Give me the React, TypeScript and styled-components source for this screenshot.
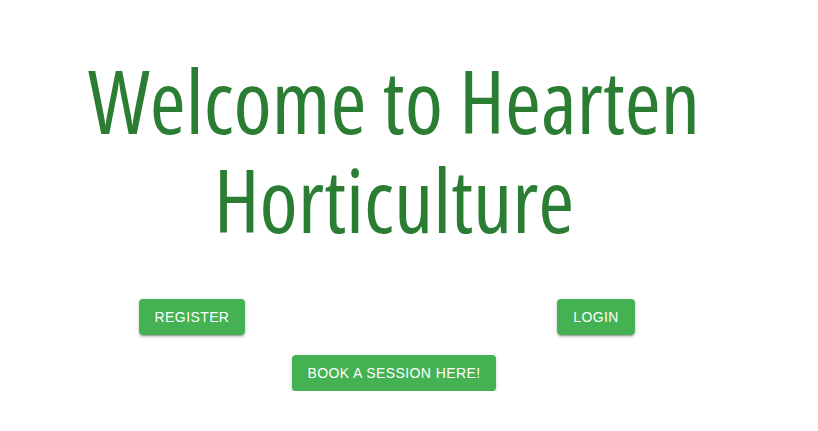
import React from "react";
import styled, { createGlobalStyle } from "styled-components";

const GlobalStyle = createGlobalStyle`
  body {
    margin: 0;
    background: #ffffff;
    font-family: "Liberation Sans", Arial, sans-serif;
  }
`;

const Page = styled.main`
  width: 788px;
  padding-top: 51px;
  display: flex;
  flex-direction: column;
  align-items: center;
`;

const Title = styled.h1`
  margin: 0;
  font-family: "Open Sans", "Liberation Sans", sans-serif;
  font-stretch: 75%;
  font-weight: 400;
  font-size: 87px;
  line-height: 99px;
  color: #2a7d32;
  text-align: center;
  max-width: 760px;
`;

const AuthRow = styled.div`
  margin-top: 50px;
  display: grid;
  grid-template-columns: 200px 200px;
  column-gap: 204px;
  justify-items: center;
`;

const BookRow = styled.div`
  margin-top: 20px;
  display: flex;
  justify-content: center;
`;

const Button = styled.button`
  height: 36px;
  padding: 0 16px;
  border: none;
  border-radius: 4px;
  background: #44b153;
  color: #ffffff;
  font-family: "Liberation Sans", Arial, sans-serif;
  font-size: 14px;
  font-weight: 400;
  letter-spacing: 0.4px;
  text-transform: uppercase;
  cursor: pointer;
  box-shadow: 0px 3px 1px -2px rgba(0, 0, 0, 0.2),
    0px 2px 2px 0px rgba(0, 0, 0, 0.14), 0px 1px 5px 0px rgba(0, 0, 0, 0.12);
`;

export default function App() {
  return (
    <>
      <GlobalStyle />
      <Page>
        <Title>Welcome to Hearten Horticulture</Title>
        <AuthRow>
          <Button>Register</Button>
          <Button>Login</Button>
        </AuthRow>
        <BookRow>
          <Button>Book a session here!</Button>
        </BookRow>
      </Page>
    </>
  );
}
